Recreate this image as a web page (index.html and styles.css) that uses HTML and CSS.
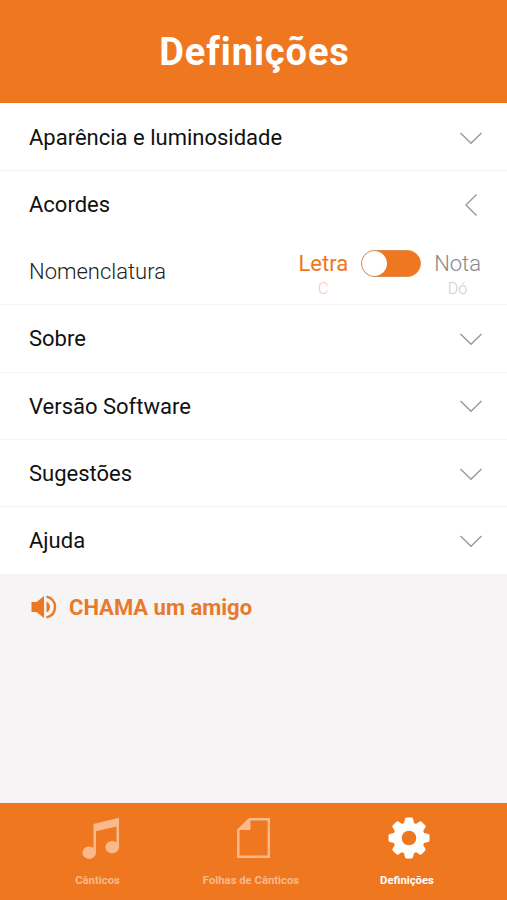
FILE: index.html
```html
<!DOCTYPE html>
<html lang="pt">
<head>
  <meta charset="UTF-8">
  <meta name="viewport" content="width=device-width, initial-scale=1.0">
  <title>Definições</title>
  <link rel="stylesheet" href="styles.css">
</head>
<body>
  <header class="header">
    <h1>Definições</h1>
  </header>

  <main class="content">
    <ul class="settings">
      <li class="item">
        <span>Aparência e luminosidade</span>
        <svg class="chevron" viewBox="0 0 24 24"><path d="M1.500 7 12 17.200 22.500 7"/></svg>
      </li>
      <li class="item open">
        <span>Acordes</span>
        <svg class="chevron" viewBox="0 0 24 24"><path d="M17.500 1.500 7 12l10.500 10.500"/></svg>
      </li>
      <li class="item sub">
        <span class="sub-label">Nomenclatura</span>
        <div class="switch">
          <div class="option selected">
            <span class="name">Letra</span>
            <span class="hint">C</span>
          </div>
          <span class="toggle"><span class="knob"></span></span>
          <div class="option">
            <span class="name">Nota</span>
            <span class="hint">Dó</span>
          </div>
        </div>
      </li>
      <li class="item">
        <span>Sobre</span>
        <svg class="chevron" viewBox="0 0 24 24"><path d="M1.500 7 12 17.200 22.500 7"/></svg>
      </li>
      <li class="item">
        <span>Versão Software</span>
        <svg class="chevron" viewBox="0 0 24 24"><path d="M1.500 7 12 17.200 22.500 7"/></svg>
      </li>
      <li class="item">
        <span>Sugestões</span>
        <svg class="chevron" viewBox="0 0 24 24"><path d="M1.500 7 12 17.200 22.500 7"/></svg>
      </li>
      <li class="item">
        <span>Ajuda</span>
        <svg class="chevron" viewBox="0 0 24 24"><path d="M1.500 7 12 17.200 22.500 7"/></svg>
      </li>
    </ul>

    <a class="invite">
      <svg class="speaker" viewBox="0 0 26 24">
        <path d="M0.500 7h5L13 1v22l-7.500-6h-5z"/>
        <path d="M15.500 6.500q3.500 2 3.500 5.500t-3.500 5.500z"/>
        <path class="wave" d="M15.500 1.600C21.500 3 24 7.500 24 12s-2.500 9-8.500 10.400"/>
      </svg>
      <span>CHAMA um amigo</span>
    </a>
  </main>

  <nav class="tabs">
    <a class="tab">
      <svg class="icon" viewBox="0 0 42 42">
        <path d="M14.500 7 40 0.800V30h-2.500V9.500L17 14.300V36h-2.500z"/>
        <ellipse cx="10.200" cy="35.700" rx="6.800" ry="6.200"/>
        <ellipse cx="33.200" cy="30.200" rx="6.800" ry="6.200"/>
      </svg>
      <span>Cânticos</span>
    </a>
    <a class="tab">
      <svg class="icon" viewBox="0 0 42 42">
        <path class="sheet" d="M17.500 2.200H36.800V39.800H6.300V13z"/>
        <path d="M18.500 1v12H5.200z"/>
      </svg>
      <span>Folhas de Cânticos</span>
    </a>
    <a class="tab active">
      <svg class="icon" viewBox="0 0 42 42">
        <g id="teeth">
          <path d="M15.500 8 17 1.800Q17.300 0.500 18.700 0.500h4.600Q24.700 0.500 25 1.800L26.500 8v26l-1.500 6.200Q24.700 41.500 23.300 41.500h-4.600Q17.300 41.500 17 40.200L15.500 34z"/>
        </g>
        <use href="#teeth" transform="rotate(45 21 21)"/>
        <use href="#teeth" transform="rotate(90 21 21)"/>
        <use href="#teeth" transform="rotate(135 21 21)"/>
        <circle cx="21" cy="21" r="15.800"/>
        <circle class="hole" cx="21" cy="21" r="7.300"/>
      </svg>
      <span>Definições</span>
    </a>
  </nav>
</body>
</html>
```

FILE: styles.css
```css
* {
  box-sizing: border-box;
}
body {
  margin: 0;
  height: 900px;
  display: flex;
  flex-direction: column;
  font-family: Roboto, sans-serif;
  color: #111;
  background: #f6f4f5;
}
.header {
  height: 103px;
  display: flex;
  justify-content: center;
  align-items: center;
  padding-left: 2px;
  background: #ef7720;
}
.header h1 {
  margin: 0;
  color: #fff;
  font-size: 38px;
  line-height: 44px;
  font-weight: 700;
  letter-spacing: 0.9px;
}
.content {
  flex: 1;
}
.settings {
  list-style: none;
  margin: 0;
  padding: 0;
  background: #fff;
}
.item {
  height: 67.300px;
  display: flex;
  justify-content: space-between;
  align-items: center;
  padding: 1px 24px 0 29px;
  border-bottom: 1px solid #f3f3f3;
  font-size: 22px;
}
.item:first-child {
  height: 68px;
  padding-top: 2px;
}
.item.open {
  height: 67px;
  padding-top: 0;
  border-bottom: none;
}
.item.sub {
  padding-right: 26px;
}
.item:last-child {
  padding-top: 0;
  border-bottom: none;
}
.chevron {
  width: 24px;
  height: 24px;
  fill: none;
  stroke: #999;
  stroke-width: 1.400;
}
.sub-label {
  font-weight: 300;
  color: #222;
}
.switch {
  display: flex;
  align-items: flex-start;
  gap: 13px;
  padding-top: 7px;
}
.option {
  display: flex;
  flex-direction: column;
  align-items: center;
  font-weight: 300;
  color: #888;
}
.name {
  line-height: 27px;
}
.hint {
  font-size: 16px;
  line-height: 23px;
  color: #ccc;
}
.selected .name {
  font-weight: 400;
  color: #ef7720;
}
.selected .hint {
  color: #f6c9a8;
}
.toggle {
  width: 60px;
  height: 27px;
  border: 1px solid #d98d50;
  border-radius: 14px;
  background: #ef7720;
}
.knob {
  display: block;
  width: 25px;
  height: 25px;
  border-radius: 50%;
  background: #fff;
}
.invite {
  height: 66px;
  display: flex;
  align-items: center;
  gap: 12px;
  padding-left: 31px;
  color: #e87a2b;
  font-size: 22px;
  font-weight: 700;
}
.speaker {
  width: 26px;
  height: 24px;
  fill: #ee7822;
}
.speaker .wave {
  fill: none;
  stroke: #ee7822;
  stroke-width: 2.400;
}
.tabs {
  height: 97px;
  display: grid;
  grid-template-columns: 153px 154px 158px;
  padding: 14px 0 0 21px;
  background: #ef7720;
}
.tab {
  display: flex;
  flex-direction: column;
  align-items: center;
  gap: 15px;
  color: #f9b98a;
  font-size: 11.300px;
  line-height: 14px;
  font-weight: 700;
}
.icon {
  width: 42px;
  height: 42px;
  margin-left: 4px;
  fill: #f9b98a;
}
.sheet {
  fill: none;
  stroke: #f9b98a;
  stroke-width: 2.500;
}
.tab.active {
  color: #fff;
}
.active .icon {
  fill: #fff;
}
.active .hole {
  fill: #ef7720;
}
```
